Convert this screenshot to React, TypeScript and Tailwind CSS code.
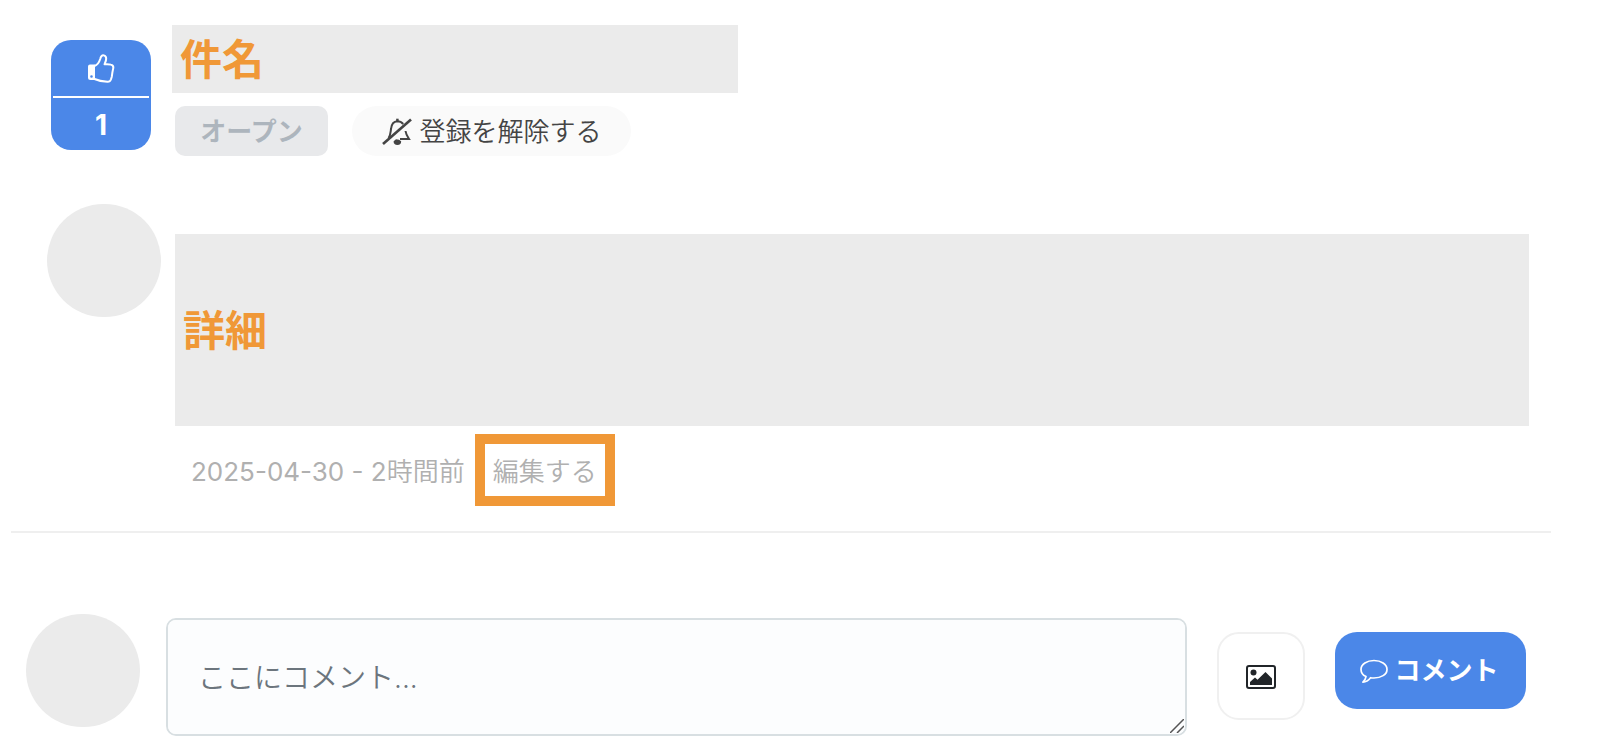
function ThumbIcon() {
  return (
    <svg width="28" height="30" viewBox="0 0 28 30" fill="none" aria-hidden="true">
      <path
        fillRule="evenodd"
        fill="#fff"
        d="M3 11.500h5V27H3.500a2.500 2.500 0 0 1-2.500-2.500V13.500a2 2 0 0 1 2-2Zm1.500 10.700a1.300 1.300 0 1 0 0 2.600 1.300 1.300 0 0 0 0-2.600Z"
      />
      <path
        d="M7.500 13c2.500-.9 4.700-3.800 5.700-7 .6-2.700 2-4 3.600-3.600 1.900.5 2.700 2.200 2.200 4.600-.3 1.600-1 2.800-1.400 4.300 2.400-.3 4.400-.2 6.200.3 2 .5 2.800 2 2.400 3.800l-.8 4-.6 4.300-.9 2.800c-.6 1.600-1.800 2.300-3.500 2.200-4.500-.2-8.700-.8-12.900-2.700"
        stroke="#fff"
        strokeWidth="2"
        strokeLinejoin="round"
      />
    </svg>
  );
}

function BellSlashIcon() {
  return (
    <svg width="32" height="30" viewBox="6 7 32 30" fill="none" stroke="#444" strokeWidth="2" aria-hidden="true">
      <path d="M13.500 28c2-2.500 2-5.500 2.500-9 .5-4.500 2.700-7.500 6.300-7.700 2.400 0 4.500 1 5.900 2.700" />
      <path d="M30.500 21c.4 3.200 1.500 5 3.500 8h-9" />
      <path d="M22.400 8.700v3" strokeWidth="2.500" />
      <path d="M18.600 31.200l2.400-2 3 .5 2.200 1.500a3.800 3.800 0 0 1-7.600 0Z" fill="#444" stroke="none" />
      <path d="M8 34 36 9.500" strokeWidth="2.600" />
    </svg>
  );
}

function ImageIcon() {
  return (
    <svg width="30" height="24" viewBox="0 0 30 24" fill="#212529" aria-hidden="true">
      <rect x="1" y="1" width="28" height="22" rx="2" fill="none" stroke="#212529" strokeWidth="2" />
      <circle cx="7.500" cy="7.500" r="3" />
      <path d="M4 20v-3l5-4.500 2.500 2.200L19.500 7l6.500 6.500V20Z" />
    </svg>
  );
}

function CommentIcon() {
  return (
    <svg width="28" height="24" viewBox="0 0 28 24" fill="none" stroke="#fff" strokeWidth="1.700" strokeLinejoin="round" aria-hidden="true">
      <path d="M14 1.500c7 0 13 3.700 13 8.900s-6 8.600-13 8.600c-1.200 0-2.300 0-3.400-.3-2 2.500-4.500 4.200-7.700 4.400 1.700-1.500 2.700-3 3.100-5.500C2.900 16 1 13.500 1 10.400 1 5.200 7 1.500 14 1.500Z" />
    </svg>
  );
}

function ResizeGrip() {
  return (
    <svg
      className="pointer-events-none absolute right-[3px] bottom-[3px]"
      width="14"
      height="14"
      viewBox="0 0 14 14"
      stroke="#555"
      strokeWidth="1.500"
      aria-hidden="true"
    >
      <path d="M0 14 14 0M7 14l7-7" />
    </svg>
  );
}

function Avatar() {
  return <div className="h-[113px] w-[114px] shrink-0 rounded-full bg-[#ebebeb]" />;
}

export default function App() {
  return (
    <main className="bg-white pt-[25px] pb-3.5 font-['Inter','Noto_Sans_CJK_JP',sans-serif] text-[26px] leading-9">
      {/* Subject and status */}
      <header className="flex pl-[51px]">
        <button
          type="button"
          aria-label="いいね 1"
          className="mt-[15px] flex h-[110px] w-[100px] flex-col rounded-[20px] bg-[#4b87e8] px-0.5 text-white"
        >
          <span className="flex h-[58px] w-full items-center justify-center border-b-2 border-white">
            <ThumbIcon />
          </span>
          <span className="flex w-full flex-1 items-center justify-center pt-0.5 text-[28px] font-bold">1</span>
        </button>
        <div className="ml-[21px]">
          <h1 className="flex h-[68px] w-[566px] items-center bg-[#ebebeb] px-2 pt-0.5 text-[42px] font-bold text-[#f09837]">
            件名
          </h1>
          <div className="mt-[13px] ml-[3px] flex gap-6">
            <button type="button" className="h-[50px] w-[153px] rounded-[10px] bg-[#e8e9eb] pt-0.5 font-bold text-[#adb5bd]">
              オープン
            </button>
            <button
              type="button"
              className="flex h-[50px] w-[279px] items-center justify-center gap-1.5 rounded-full bg-[#fafafa] pt-0.5 font-[350] text-[#444]"
            >
              <BellSlashIcon />
              登録を解除する
            </button>
          </div>
        </div>
      </header>

      {/* Details */}
      <article className="mt-12 flex gap-3.5 pr-[71px] pl-[47px]">
        <Avatar />
        <div className="min-w-0 flex-1 pt-[30px]">
          <div className="flex h-48 items-center bg-[#ebebeb] px-2 pt-0.5 text-[42px] font-bold text-[#f09837]">
            詳細
          </div>
          <div className="mt-2 flex items-center gap-2.5 pl-4 text-[#b0b0b0]">
            <span className="pt-1">
              2025-04-30 - 2<span className="font-[350]">時間前</span>
            </span>
            <a
              href="#edit"
              className="flex h-[72px] w-[140px] items-center justify-center border-[10px] border-[#f09837] pt-1 font-[350]"
            >
              編集する
            </a>
          </div>
        </div>
      </article>

      <hr className="mt-[25px] mr-[49px] ml-[11px] border-t-2 border-[#efefef]" />

      {/* New comment */}
      <form className="mt-[81px] flex items-start pr-[74px] pl-[26px]">
        <Avatar />
        <div className="relative mt-1 ml-[26px] min-w-0 flex-1">
          <textarea
            aria-label="コメント"
            placeholder="ここにコメント..."
            className="block h-[118px] w-full rounded-[10px] border-2 border-[#d8dfe2] bg-[#fcfdfe] px-[30px] py-10 text-[28px] text-[#212529] placeholder:font-[350] placeholder:text-[#6c757d] [&::-webkit-resizer]:hidden"
          />
          <ResizeGrip />
        </div>
        <button
          type="button"
          aria-label="画像を追加"
          className="mt-[18px] ml-[30px] flex size-[88px] shrink-0 items-center justify-center rounded-[22px] border-2 border-[#f0f0f0] pt-0.5"
        >
          <ImageIcon />
        </button>
        <button
          type="submit"
          className="mt-[18px] ml-[30px] flex h-[77px] w-[191px] shrink-0 items-center justify-center gap-1.5 rounded-[22px] bg-[#4b87e8] pr-0.5 font-bold text-white"
        >
          <CommentIcon />
          コメント
        </button>
      </form>
    </main>
  );
}
